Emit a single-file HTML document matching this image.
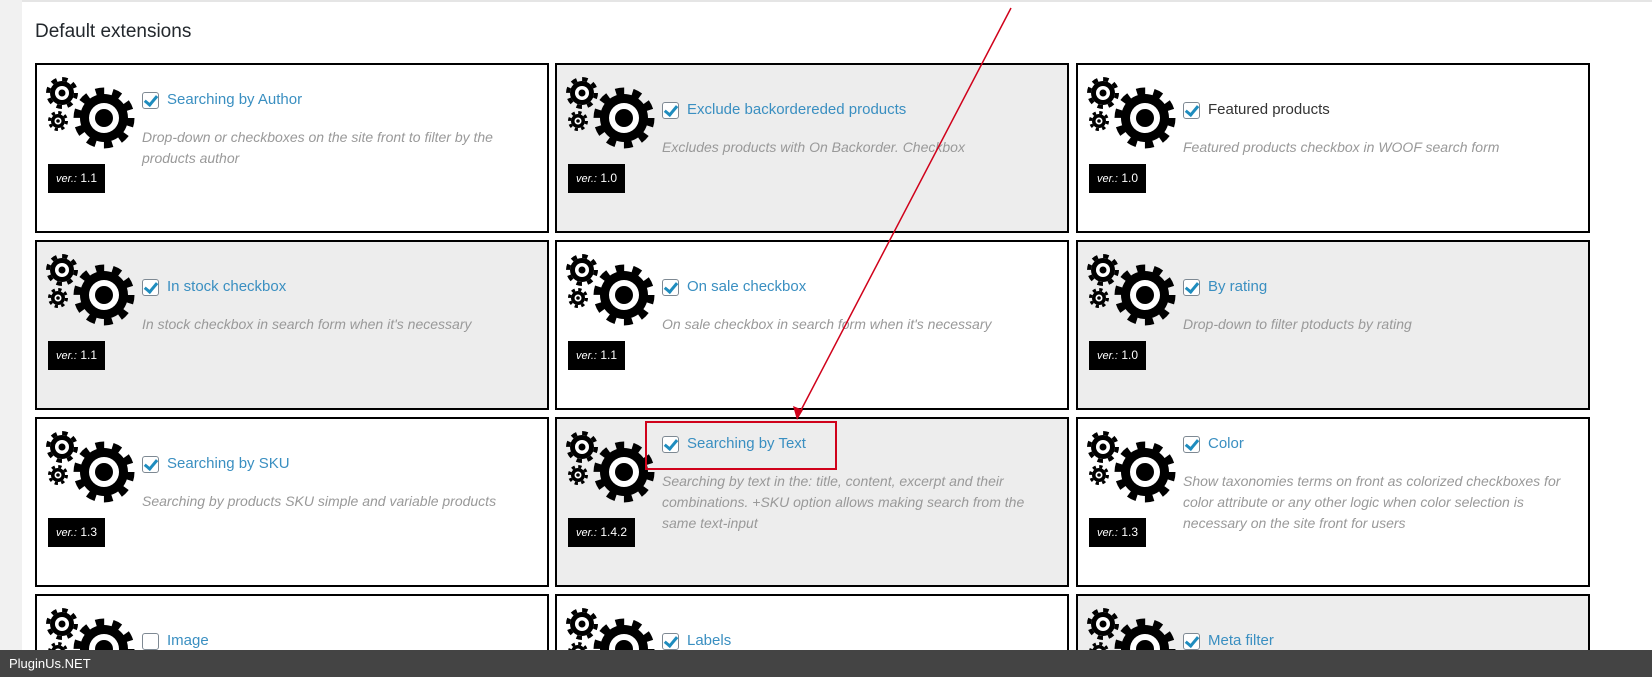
<!DOCTYPE html>
<html style="height:677px;overflow:hidden"><head><meta charset="utf-8"><style>
html,body{margin:0;width:1652px;height:677px;overflow:hidden}
body{background:#fff;font-family:"Liberation Sans",sans-serif;position:relative}
.strip{position:absolute;left:0;top:0;width:22px;height:677px;background:#f1f1f1}
.topline{position:absolute;left:22px;top:0;width:1630px;height:2px;background:#e5e5e5}
h2{position:absolute;left:35px;top:21px;margin:0;font-size:19px;font-weight:normal;color:#23282d}
.box{position:absolute;width:510px;height:166px;border:2px solid #000;background:#fff;overflow:hidden}
.short{height:70px;border-bottom:0}
.g{background:#ededed}
.gear{position:absolute;left:9px;top:9px}
.ver{position:absolute;left:11px;top:99px;height:29px;line-height:29px;background:#000;color:#fff;font-size:12px;padding:0 8px}
.ver i{font-size:11px}
.txt{position:absolute;left:105px;right:14px}
.t{font-size:15px;color:#3a8fc1;height:22px;line-height:22px;display:flex;align-items:center}
.cb{display:inline-block;width:15px;height:15px;border:1px solid #7e8993;border-radius:3px;margin-right:8px;background:#fff;position:relative;flex:none}
.cb.c::after{content:"";position:absolute;left:4px;top:0px;width:5px;height:10px;border:solid #1e8cbe;border-width:0 3px 3px 0;transform:rotate(40deg)}
.d{font-size:14px;font-style:italic;color:#999;line-height:21px;margin-top:16px}
.foot{position:absolute;left:0;top:650px;width:1652px;height:27px;background:#444;color:#fff;font-size:13px;line-height:27px;padding-left:9px;box-sizing:border-box}
</style></head><body>
<div class="strip"></div><div class="topline"></div>
<h2>Default extensions</h2>
<svg width="0" height="0" style="position:absolute"><defs>
<g id="gears">
<circle cx="58" cy="44" r="24" fill="#000"/>
<circle cx="58" cy="44" r="27" fill="none" stroke="#000" stroke-width="7" stroke-dasharray="8.5 8.46"/>
<circle cx="58" cy="44" r="15" fill="#fff"/><circle cx="58" cy="44" r="9" fill="#000"/>
<circle cx="16" cy="19" r="12" fill="#000"/>
<circle cx="16" cy="19" r="14" fill="none" stroke="#000" stroke-width="4" stroke-dasharray="5.5 5.5"/>
<circle cx="16" cy="19" r="7" fill="#fff"/><circle cx="16" cy="19" r="3.5" fill="#000"/>
<circle cx="12" cy="47" r="7" fill="#000"/>
<circle cx="12" cy="47" r="8.5" fill="none" stroke="#000" stroke-width="3" stroke-dasharray="3.3 3.37"/>
<circle cx="12" cy="47" r="3.5" fill="#fff"/><circle cx="12" cy="47" r="1.8" fill="#000"/>
</g></defs></svg>

<div class="box" style="left:35px;top:63px"><svg class="gear" width="90" height="76"><use href="#gears"/></svg><div class="ver"><i>ver.:</i> 1.1</div>
<div class="txt" style="top:24px"><div class="t"><span class="cb c"></span>Searching by Author</div><div class="d">Drop-down or checkboxes on the site front to filter by the products author</div></div></div>
<div class="box g" style="left:555px;top:63px"><svg class="gear" width="90" height="76"><use href="#gears"/></svg><div class="ver"><i>ver.:</i> 1.0</div>
<div class="txt" style="top:34px"><div class="t"><span class="cb c"></span>Exclude backordereded products</div><div class="d">Excludes products with On Backorder. Checkbox</div></div></div>
<div class="box" style="left:1076px;top:63px"><svg class="gear" width="90" height="76"><use href="#gears"/></svg><div class="ver"><i>ver.:</i> 1.0</div>
<div class="txt" style="top:34px"><div class="t" style="color:#333"><span class="cb c"></span>Featured products</div><div class="d">Featured products checkbox in WOOF search form</div></div></div>

<div class="box g" style="left:35px;top:240px"><svg class="gear" width="90" height="76"><use href="#gears"/></svg><div class="ver"><i>ver.:</i> 1.1</div>
<div class="txt" style="top:34px"><div class="t"><span class="cb c"></span>In stock checkbox</div><div class="d">In stock checkbox in search form when it's necessary</div></div></div>
<div class="box" style="left:555px;top:240px"><svg class="gear" width="90" height="76"><use href="#gears"/></svg><div class="ver"><i>ver.:</i> 1.1</div>
<div class="txt" style="top:34px"><div class="t"><span class="cb c"></span>On sale checkbox</div><div class="d">On sale checkbox in search form when it's necessary</div></div></div>
<div class="box g" style="left:1076px;top:240px"><svg class="gear" width="90" height="76"><use href="#gears"/></svg><div class="ver"><i>ver.:</i> 1.0</div>
<div class="txt" style="top:34px"><div class="t"><span class="cb c"></span>By rating</div><div class="d">Drop-down to filter ptoducts by rating</div></div></div>

<div class="box" style="left:35px;top:417px"><svg class="gear" width="90" height="76"><use href="#gears"/></svg><div class="ver"><i>ver.:</i> 1.3</div>
<div class="txt" style="top:34px"><div class="t"><span class="cb c"></span>Searching by SKU</div><div class="d">Searching by products SKU simple and variable products</div></div></div>
<div class="box g" style="left:555px;top:417px"><svg class="gear" width="90" height="76"><use href="#gears"/></svg><div class="ver"><i>ver.:</i> 1.4.2</div>
<div class="txt" style="top:14px"><div class="t"><span class="cb c"></span>Searching by Text</div><div class="d">Searching by text in the: title, content, excerpt and their combinations. +SKU option allows making search from the same text-input</div></div></div>
<div class="box" style="left:1076px;top:417px"><svg class="gear" width="90" height="76"><use href="#gears"/></svg><div class="ver"><i>ver.:</i> 1.3</div>
<div class="txt" style="top:14px"><div class="t"><span class="cb c"></span>Color</div><div class="d">Show taxonomies terms on front as colorized checkboxes for color attribute or any other logic when color selection is necessary on the site front for users</div></div></div>

<div class="box short" style="left:35px;top:594px"><svg class="gear" width="90" height="76"><use href="#gears"/></svg>
<div class="txt" style="top:34px"><div class="t"><span class="cb"></span>Image</div></div></div>
<div class="box short" style="left:555px;top:594px"><svg class="gear" width="90" height="76"><use href="#gears"/></svg>
<div class="txt" style="top:34px"><div class="t"><span class="cb c"></span>Labels</div></div></div>
<div class="box short g" style="left:1076px;top:594px"><svg class="gear" width="90" height="76"><use href="#gears"/></svg>
<div class="txt" style="top:34px"><div class="t"><span class="cb c"></span>Meta filter</div></div></div>

<div style="position:absolute;left:645px;top:421px;width:188px;height:45px;border:2px solid #d0021b"></div>
<svg style="position:absolute;left:0;top:0" width="1652" height="677">
<line x1="1011" y1="8" x2="799" y2="414" stroke="#d0021b" stroke-width="1.5"/>
<polygon points="797,420 793,406 803,410" fill="#d0021b"/>
</svg>
<div class="foot">PluginUs.NET</div>
</body></html>
